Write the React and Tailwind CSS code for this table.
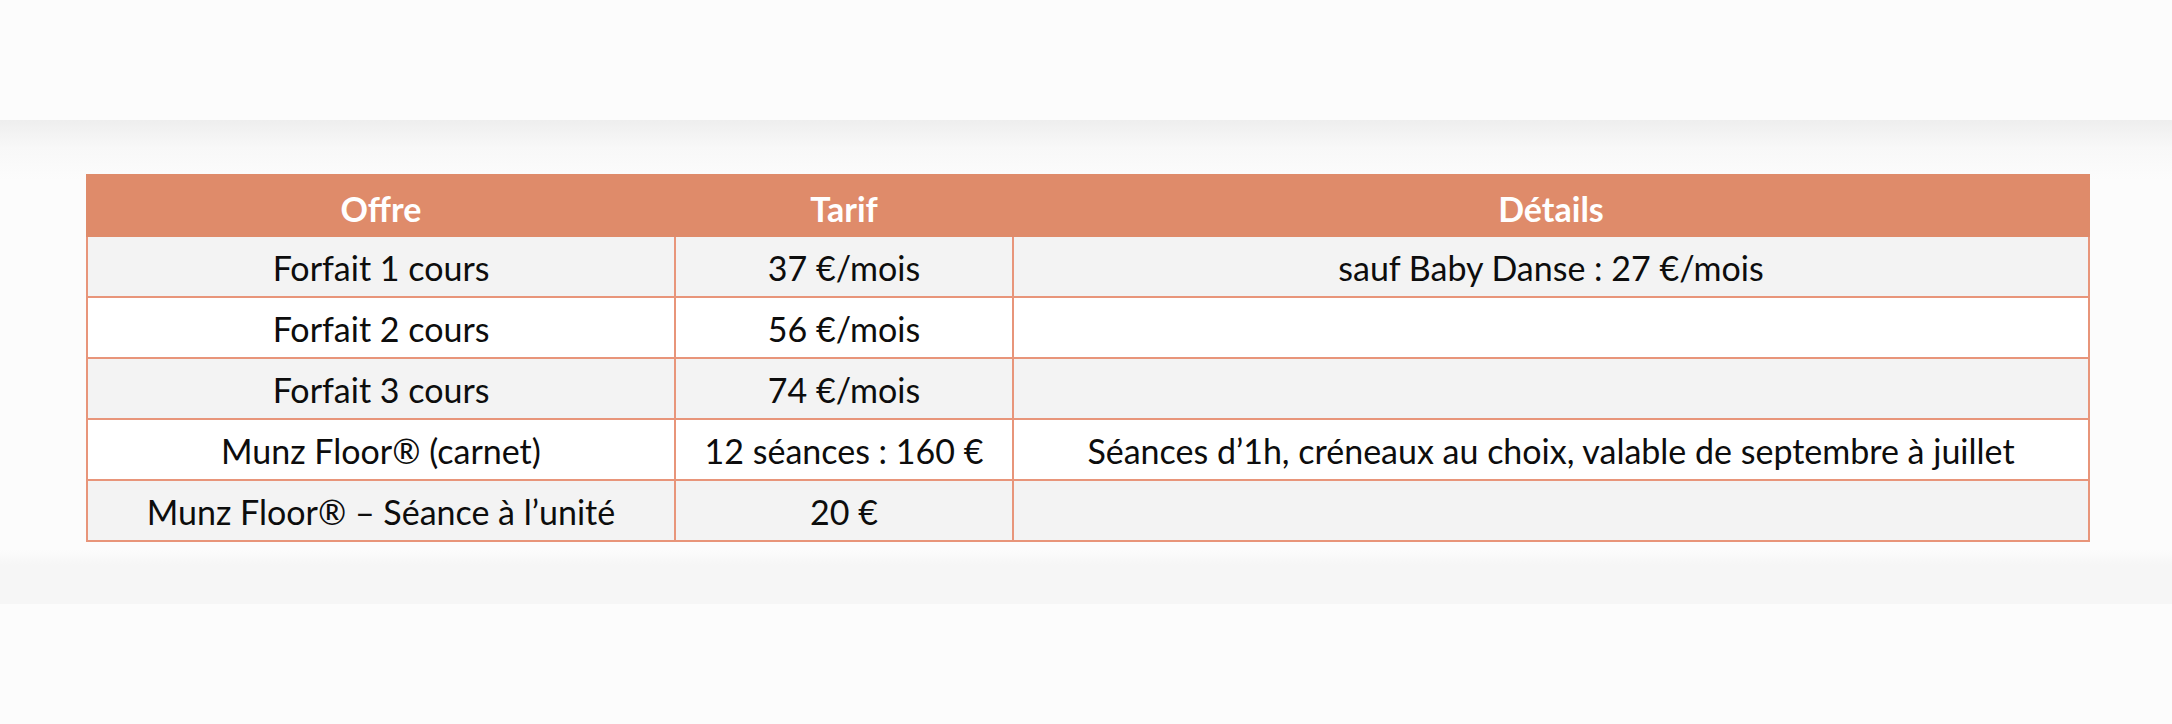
import React from "react";

const rows = [
  { offre: "Forfait 1 cours", tarif: "37 €/mois", details: "sauf Baby Danse : 27 €/mois" },
  { offre: "Forfait 2 cours", tarif: "56 €/mois", details: "" },
  { offre: "Forfait 3 cours", tarif: "74 €/mois", details: "" },
  {
    offre: "Munz Floor® (carnet)",
    tarif: "12 séances : 160 €",
    details: "Séances d’1h, créneaux au choix, valable de septembre à juillet",
  },
  { offre: "Munz Floor® – Séance à l’unité", tarif: "20 €", details: "" },
];

const App = () => {
  return (
    <div
      className="w-full min-h-[724px] bg-[#fcfcfc] text-[#0d0d0d]"
      style={{ fontFamily: "Lato, 'Open Sans', sans-serif" }}
    >
      <div className="h-[120px]" />

      {/* tarifs section */}
      <section className="bg-[linear-gradient(to_bottom,#eeeeee_0px,#f8f8f8_28px,#fcfcfc_60px,#fcfcfc_430px,#f6f6f6_445px,#f6f6f6_481px)] pt-[54px] pb-[62px] pl-[86px] pr-[82px]">
        <table className="w-full border-collapse text-center text-[34px] leading-none">
          <colgroup>
            <col className="w-[588px]" />
            <col className="w-[338px]" />
            <col />
          </colgroup>
          <thead>
            <tr className="h-[61px] bg-[#df8b6a] text-white">
              <th className="pt-[6px] font-bold border-2 border-[#df8b6a]">Offre</th>
              <th className="pt-[6px] font-bold border-2 border-[#df8b6a]">Tarif</th>
              <th className="pt-[6px] font-bold border-2 border-[#df8b6a]">Détails</th>
            </tr>
          </thead>
          <tbody>
            {rows.map((row, i) => (
              <tr
                key={i}
                className={`h-[61px] ${i % 2 === 0 ? "bg-[#f3f3f3]" : "bg-white"}`}
              >
                <td className="pt-[3px] border-2 border-[#e8957a]">{row.offre}</td>
                <td className="pt-[3px] border-2 border-[#e8957a]">{row.tarif}</td>
                <td className="pt-[3px] border-2 border-[#e8957a]">{row.details}</td>
              </tr>
            ))}
          </tbody>
        </table>
      </section>
    </div>
  );
};

export default App;
